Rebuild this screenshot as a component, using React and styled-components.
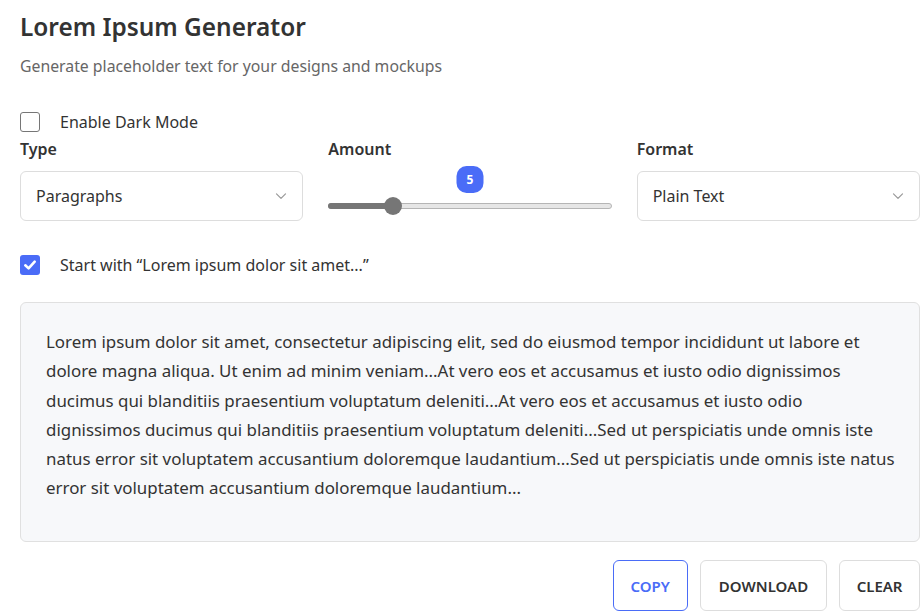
import React, { useState } from "react";
import styled, { createGlobalStyle } from "styled-components";

const GlobalStyle = createGlobalStyle`
  body {
    margin: 0;
    background: #ffffff;
    font-family: "Segoe UI", "Noto Sans", "Open Sans", sans-serif;
    color: #333333;
  }
`;

const Page = styled.div`
  width: 900px;
  padding: 9px 0 0 20px;
`;

const Title = styled.h1`
  margin: 0;
  font-size: 24.4px;
  font-weight: 600;
  color: #333;
  line-height: 36px;
`;

const Subtitle = styled.p`
  margin: 10px 0 0;
  font-size: 15.8px;
  color: #666;
  line-height: 22px;
`;

const CheckRow = styled.label`
  display: flex;
  align-items: center;
  gap: 20px;
  margin-top: ${(p) => p.$top}px;
  font-size: 16px;
  color: #333;
  line-height: 22px;
`;

const Box = styled.span`
  width: 20px;
  height: 20px;
  box-sizing: border-box;
  border-radius: 3px;
  border: ${(p) => (p.$checked ? "none" : "1.5px solid #767676")};
  background: ${(p) => (p.$checked ? "#4a6cf7" : "#fff")};
  display: flex;
  align-items: center;
  justify-content: center;
  flex-shrink: 0;
`;

const Controls = styled.div`
  display: grid;
  grid-template-columns: repeat(3, 1fr);
  gap: 25px;
  margin-top: 5px;
`;

const Field = styled.div`
  display: flex;
  flex-direction: column;
`;

const Label = styled.div`
  font-size: 16px;
  font-weight: 600;
  color: #333;
  line-height: 22px;
  margin-bottom: 11px;
`;

const Select = styled.div`
  height: 50px;
  box-sizing: border-box;
  border: 1px solid #dddddd;
  border-radius: 6px;
  display: flex;
  align-items: center;
  justify-content: space-between;
  padding: 0 14px 0 15px;
  font-size: 16px;
  color: #333;
`;

const SliderWrap = styled.div`
  position: relative;
  height: 50px;
`;

const Badge = styled.div`
  position: absolute;
  left: 50%;
  top: -5px;
  transform: translateX(-50%);
  width: 27px;
  height: 27px;
  border-radius: 10px;
  background: #4a6cf7;
  color: #fff;
  font-size: 12px;
  font-weight: 700;
  display: flex;
  align-items: center;
  justify-content: center;
`;

const Track = styled.div`
  position: absolute;
  left: 0;
  right: 0;
  top: 32px;
  height: 6px;
  border-radius: 3px;
  background: #e6e6e6;
  border: 1px solid #b5b5b5;
  box-sizing: border-box;
`;

const Fill = styled.div`
  position: absolute;
  left: 0;
  top: 32px;
  height: 6px;
  border-radius: 3px;
  background: #767676;
`;

const Thumb = styled.div`
  position: absolute;
  top: 26px;
  width: 18px;
  height: 18px;
  margin-left: -9px;
  border-radius: 50%;
  background: #767676;
`;

const Output = styled.div`
  margin-top: 26px;
  box-sizing: border-box;
  height: 240px;
  border: 1px solid #e0e0e0;
  border-radius: 6px;
  background: #f7f8fa;
  padding: 24px 24px 0 25px;
  font-size: 16.9px;
  line-height: 29.3px;
  color: #333;
`;

const Actions = styled.div`
  display: flex;
  justify-content: flex-end;
  gap: 12px;
  margin-top: 18px;
`;

const Button = styled.button`
  height: 51px;
  padding: 0 ${(p) => p.$pad}px;
  border-radius: 6px;
  background: #fff;
  border: 1px solid ${(p) => (p.$primary ? "#4a6cf7" : "#dddddd")};
  color: ${(p) => (p.$primary ? "#4a6cf7" : "#333")};
  font-family: inherit;
  font-size: 15px;
  font-weight: 600;
  text-transform: uppercase;
  cursor: pointer;
`;

const Chevron = () => (
  <svg width="14" height="14" viewBox="0 0 14 14" fill="none">
    <path d="M2.5 4.8 L7 9.3 L11.5 4.8" stroke="#999" strokeWidth="1.2" strokeLinecap="round" strokeLinejoin="round" />
  </svg>
);

const TEXT =
  "Lorem ipsum dolor sit amet, consectetur adipiscing elit, sed do eiusmod tempor incididunt ut labore et dolore magna aliqua. Ut enim ad minim veniam...At vero eos et accusamus et iusto odio dignissimos ducimus qui blanditiis praesentium voluptatum deleniti...At vero eos et accusamus et iusto odio dignissimos ducimus qui blanditiis praesentium voluptatum deleniti...Sed ut perspiciatis unde omnis iste natus error sit voluptatem accusantium doloremque laudantium...Sed ut perspiciatis unde omnis iste natus error sit voluptatem accusantium doloremque laudantium...";

export default function App() {
  const [amount] = useState(5);
  const min = 1;
  const max = 20;
  const width = 282;
  const thumbX = 9 + ((amount - min) / (max - min)) * (width - 18);

  return (
    <Page>
      <GlobalStyle />
      <Title>Lorem Ipsum Generator</Title>
      <Subtitle>Generate placeholder text for your designs and mockups</Subtitle>

      <CheckRow $top={34}>
        <Box />
        Enable Dark Mode
      </CheckRow>

      <Controls>
        <Field>
          <Label>Type</Label>
          <Select>
            Paragraphs
            <Chevron />
          </Select>
        </Field>
        <Field>
          <Label>Amount</Label>
          <SliderWrap>
            <Badge>{amount}</Badge>
            <Track />
            <Fill style={{ width: thumbX }} />
            <Thumb style={{ left: thumbX }} />
          </SliderWrap>
        </Field>
        <Field>
          <Label>Format</Label>
          <Select>
            Plain Text
            <Chevron />
          </Select>
        </Field>
      </Controls>

      <CheckRow $top={33}>
        <Box $checked>
          <svg width="14" height="14" viewBox="0 0 14 14" fill="none">
            <path d="M2.3 7.3 L5.6 10.4 L11.7 3.6" stroke="#fff" strokeWidth="2.6" strokeLinecap="round" strokeLinejoin="round" />
          </svg>
        </Box>
        Start with “Lorem ipsum dolor sit amet...”
      </CheckRow>

      <Output>{TEXT}</Output>

      <Actions>
        <Button $primary $pad={17}>Copy</Button>
        <Button $pad={18}>Download</Button>
        <Button $pad={16.5}>Clear</Button>
      </Actions>
    </Page>
  );
}
